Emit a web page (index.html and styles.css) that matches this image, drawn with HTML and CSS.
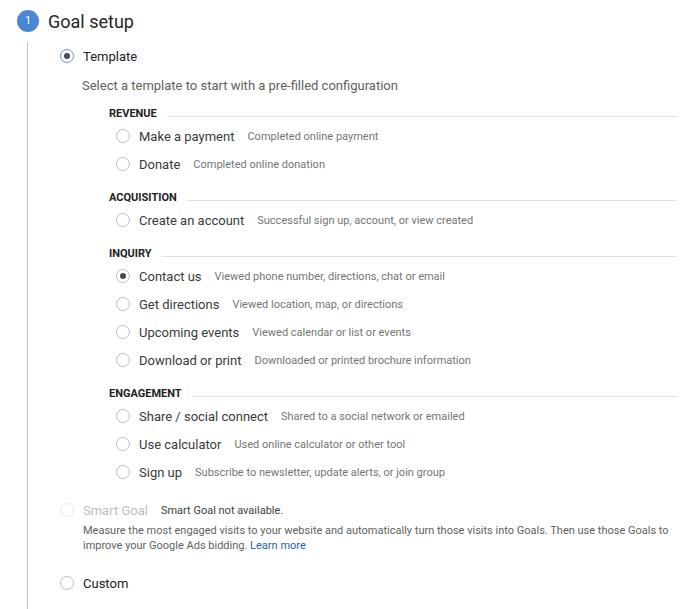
FILE: index.html
```html
<!DOCTYPE html>
<html>
<head>
<meta charset="utf-8">
<link rel="stylesheet" href="styles.css">
</head>
<body>
<div class="step">
  <div class="step-head">
    <div class="step-num">1</div>
    <div class="step-title">Goal setup</div>
  </div>
  <div class="step-body">
    <div class="opt-row top">
      <span class="radio selected"></span>
      <span class="top-label">Template</span>
    </div>
    <div class="intro">Select a template to start with a pre-filled configuration</div>

    <div class="groups">
      <div class="group first">
        <div class="group-head"><span class="group-name">REVENUE</span><span class="rule"></span></div>
        <div class="opt-row"><span class="radio"></span><span class="label">Make a payment</span><span class="desc">Completed online payment</span></div>
        <div class="opt-row"><span class="radio"></span><span class="label">Donate</span><span class="desc">Completed online donation</span></div>
      </div>
      <div class="group">
        <div class="group-head"><span class="group-name">ACQUISITION</span><span class="rule"></span></div>
        <div class="opt-row"><span class="radio"></span><span class="label">Create an account</span><span class="desc">Successful sign up, account, or view created</span></div>
      </div>
      <div class="group">
        <div class="group-head"><span class="group-name">INQUIRY</span><span class="rule"></span></div>
        <div class="opt-row"><span class="radio checked"></span><span class="label">Contact us</span><span class="desc">Viewed phone number, directions, chat or email</span></div>
        <div class="opt-row"><span class="radio"></span><span class="label">Get directions</span><span class="desc">Viewed location, map, or directions</span></div>
        <div class="opt-row"><span class="radio"></span><span class="label">Upcoming events</span><span class="desc">Viewed calendar or list or events</span></div>
        <div class="opt-row"><span class="radio"></span><span class="label">Download or print</span><span class="desc">Downloaded or printed brochure information</span></div>
      </div>
      <div class="group">
        <div class="group-head"><span class="group-name">ENGAGEMENT</span><span class="rule"></span></div>
        <div class="opt-row"><span class="radio"></span><span class="label">Share / social connect</span><span class="desc">Shared to a social network or emailed</span></div>
        <div class="opt-row"><span class="radio"></span><span class="label">Use calculator</span><span class="desc">Used online calculator or other tool</span></div>
        <div class="opt-row"><span class="radio"></span><span class="label">Sign up</span><span class="desc">Subscribe to newsletter, update alerts, or join group</span></div>
      </div>
    </div>

    <div class="opt-row smart">
      <span class="radio disabled"></span>
      <span class="top-label muted">Smart Goal</span>
      <span class="desc dark">Smart Goal not available.</span>
    </div>
    <div class="smart-desc">
      <div class="smart-line">Measure the most engaged visits to your website and automatically turn those visits into Goals. Then use those Goals to</div>
      <div class="smart-line"><span>improve your Google Ads bidding.</span> <a class="link" href="#">Learn more</a></div>
    </div>

    <div class="opt-row top custom">
      <span class="radio"></span>
      <span class="top-label">Custom</span>
    </div>
  </div>
</div>
</body>
</html>
```

FILE: styles.css
```css
html, body {
  margin: 0;
  padding: 0;
  background: #ffffff;
}
body {
  font-family: Roboto, "Noto Sans", Arial, sans-serif;
  color: #212121;
  width: 696px;
  height: 609px;
  overflow: hidden;
}
.step-head {
  display: flex;
  align-items: center;
  height: 42px;
  padding-left: 17px;
}
.step-num {
  width: 22px;
  height: 22px;
  border-radius: 50%;
  background: #4a86d4;
  color: #ffffff;
  font-size: 11px;
  line-height: 22px;
  text-align: center;
}
.step-title {
  margin-left: 9px;
  font-size: 18px;
  color: #262626;
}
.step-body {
  margin-left: 27px;
  border-left: 1px solid #c6c6c6;
  padding-left: 32px;
  padding-bottom: 20px;
  min-height: 560px;
}
.opt-row {
  display: flex;
  align-items: center;
  height: 28px;
}
.radio {
  flex: none;
  box-sizing: border-box;
  width: 14px;
  height: 14px;
  border-radius: 50%;
  border: 1px solid #bdbdbd;
  margin-right: 9px;
  display: flex;
  align-items: center;
  justify-content: center;
}
.radio.selected {
  border: 1.5px solid #5f95e8;
}
.radio.selected::after,
.radio.checked::after {
  content: "";
  width: 6px;
  height: 6px;
  border-radius: 50%;
  background: #4a4a4a;
}
.radio.disabled {
  border-color: #e6e6e6;
}
.top-label {
  font-size: 13px;
  color: #212121;
}
.top-label.muted {
  color: #bdbdbd;
  margin-right: 13px;
}
.intro {
  margin-top: 6px;
  margin-left: 22px;
  font-size: 13px;
  line-height: 20px;
  color: #5f5f5f;
}
.groups {
  padding-left: 49px;
}
.group {
  margin-top: 10px;
}
.group.first {
  margin-top: 8px;
}
.group-head {
  display: flex;
  align-items: center;
  height: 18px;
}
.group-name {
  font-size: 11px;
  font-weight: 700;
  color: #212121;
  margin-right: 10px;
}
.rule {
  flex: 1;
  height: 1px;
  background: #e0e0e0;
  margin-top: 6px;
  margin-right: 19px;
}
.group .opt-row {
  padding-left: 7px;
}
.label {
  font-size: 13px;
  color: #3a3a3a;
  margin-right: 13px;
}
.desc {
  font-size: 11px;
  color: #757575;
}
.desc.dark {
  color: #424242;
}
.opt-row.smart {
  margin-top: 11px;
  height: 26px;
}
.smart-desc {
  margin-top: 1px;
  margin-left: 23px;
  margin-right: 24px;
  font-size: 11px;
  color: #5f5f5f;
}
.smart-line {
  height: 14.5px;
  line-height: 14.5px;
  white-space: nowrap;
}
.link {
  color: #1a5fb4;
  text-decoration: none;
}
.opt-row.custom {
  margin-top: 16px;
}
```
